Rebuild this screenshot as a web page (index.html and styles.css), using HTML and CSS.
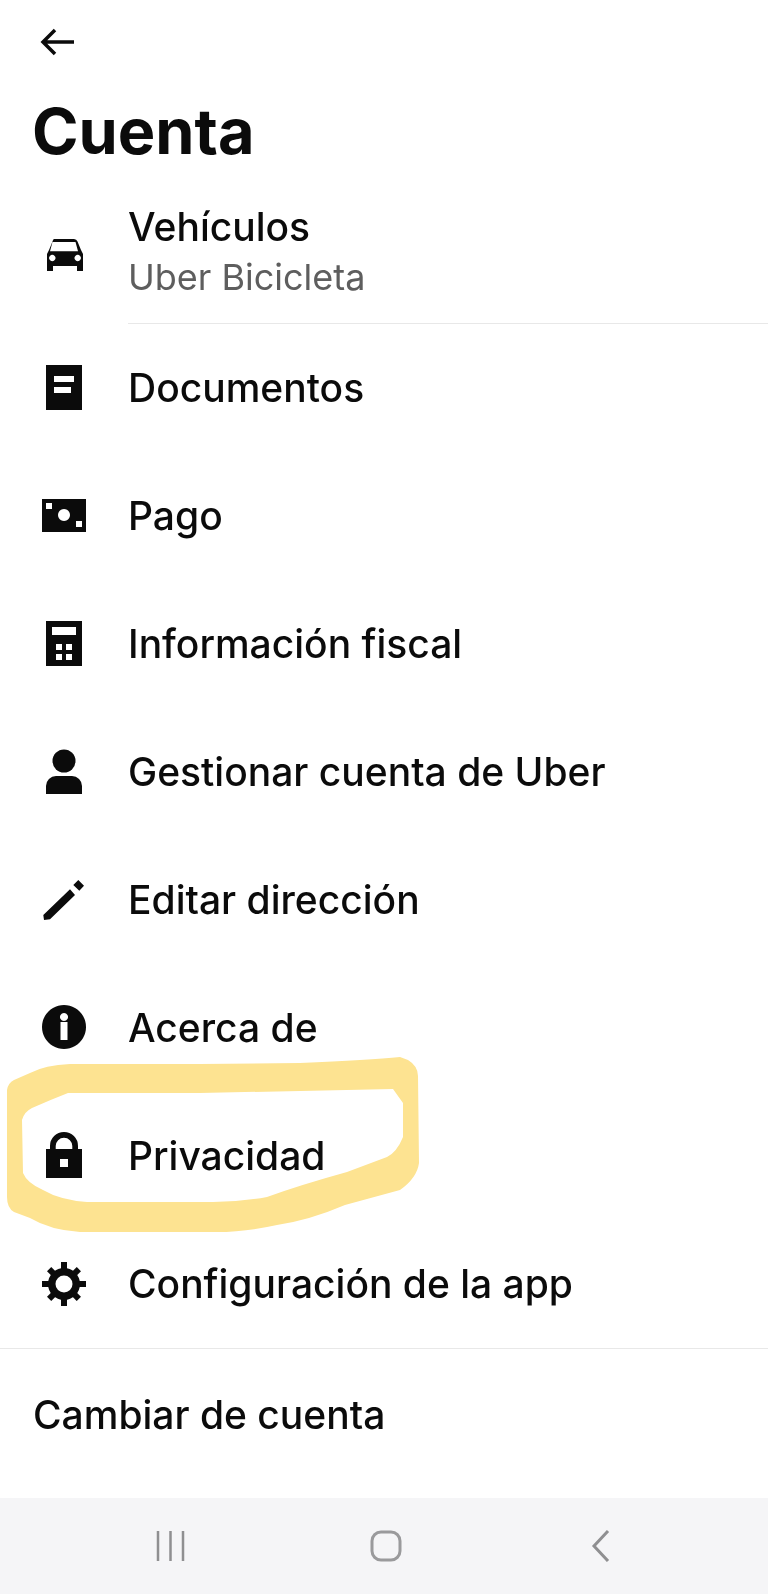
FILE: index.html
```html
<!DOCTYPE html>
<html lang="es">
<head>
<meta charset="utf-8">
<title>Cuenta</title>
<link rel="stylesheet" href="styles.css">
</head>
<body>
<div class="screen">
  <header class="head">
    <svg class="back" viewBox="0 0 36 30" aria-hidden="true"><path d="M34 15H3M15 3 3 15l12 12" fill="none" stroke="#0b0b0b" stroke-width="3.500"/></svg>
    <h1 class="title">Cuenta</h1>
  </header>
  <main class="menu">
    <div class="row row-first">
      <svg class="icon" viewBox="0 0 48 48" aria-hidden="true"><path fill-rule="evenodd" d="M14 7h20q2.500 0 3.500 2.500L41 18l2 4v17h-6v-5H13v5H7V22l2-4 3.500-8.500Q13 7 14 7Zm-1.500 3L10 19.300h28L35.500 10ZM12.300 22.800a3.200 3.200 0 1 0 .01 0ZM37.700 22.800a3.200 3.200 0 1 0 .01 0Z" fill="#0b0b0b"/></svg>
      <div class="two">
        <span class="label">Vehículos</span>
        <span class="sub">Uber Bicicleta</span>
      </div>
    </div>
    <div class="row">
      <svg class="icon" viewBox="0 0 48 48" aria-hidden="true"><path fill-rule="evenodd" d="M6 1h36v45H6ZM14 12v6h20v-6ZM14 23v6h17v-6Z" fill="#0b0b0b"/></svg>
      <span class="label">Documentos</span>
    </div>
    <div class="row">
      <svg class="icon" viewBox="0 0 48 48" aria-hidden="true"><path fill-rule="evenodd" d="M2 7h44v33H2ZM6 11v6h6v-6ZM36 29v6h6v-6ZM24 17a6 6 0 1 0 .01 0Z" fill="#0b0b0b"/></svg>
      <span class="label">Pago</span>
    </div>
    <div class="row">
      <svg class="icon" viewBox="0 0 48 48" aria-hidden="true"><path fill-rule="evenodd" d="M6 1h36v45H6ZM12 7v8h24v-8ZM16 24v6h6v-6ZM26 24v6h6v-6ZM16 34v6h6v-6ZM26 34v6h6v-6Z" fill="#0b0b0b"/></svg>
      <span class="label">Información fiscal</span>
    </div>
    <div class="row">
      <svg class="icon" viewBox="0 0 48 48" aria-hidden="true"><circle cx="24" cy="13" r="11.500" fill="#0b0b0b"/><path d="M6 46V38a10 10 0 0 1 10-10h16a10 10 0 0 1 10 10v8Z" fill="#0b0b0b"/></svg>
      <span class="label">Gestionar cuenta de Uber</span>
    </div>
    <div class="row">
      <svg class="icon" viewBox="0 0 48 48" aria-hidden="true"><path d="M3.300 39 30 13.300 35 19 10 43.300 4 44ZM38.300 4 44 9.700 39.300 14.700 33.300 9Z" fill="#0b0b0b"/></svg>
      <span class="label">Editar dirección</span>
    </div>
    <div class="row">
      <svg class="icon" viewBox="0 0 48 48" aria-hidden="true"><path fill-rule="evenodd" d="M24 1a22 22 0 1 0 .01 0ZM24 9a4 4 0 1 0 .01 0ZM20.500 18v18h7V18Z" fill="#0b0b0b"/></svg>
      <span class="label">Acerca de</span>
    </div>
    <div class="row">
      <svg class="icon" viewBox="0 0 48 48" aria-hidden="true"><path fill-rule="evenodd" d="M6 17h4v-3a14 14 0 0 1 28 0v3h4v29H6ZM15.700 17h16.600v-3a8.300 8.300 0 0 0-16.600 0ZM20 27v8h8v-8Z" fill="#0b0b0b"/></svg>
      <span class="label">Privacidad</span>
    </div>
    <div class="row">
      <svg class="icon" viewBox="0 0 48 48" aria-hidden="true">
        <circle cx="24" cy="24" r="16" fill="#0b0b0b"/>
        <g fill="#0b0b0b">
          <rect x="21" y="2" width="6" height="44"/>
          <rect x="2" y="21" width="44" height="6"/>
          <rect x="21" y="3" width="6" height="42" transform="rotate(45 24 24)"/>
          <rect x="21" y="3" width="6" height="42" transform="rotate(-45 24 24)"/>
        </g>
        <circle cx="24" cy="24" r="8.500" fill="#fff"/>
      </svg>
      <span class="label">Configuración de la app</span>
    </div>
    <div class="switch">
      <span class="label">Cambiar de cuenta</span>
    </div>
  </main>
  <nav class="navbar">
    <svg class="nav-recent" viewBox="0 0 32 32" aria-hidden="true"><path d="M3 1v30M15.500 1v30M28 1v30" stroke="#8f8f91" stroke-width="2.500" fill="none"/></svg>
    <svg class="nav-home" viewBox="0 0 32 32" aria-hidden="true"><rect x="2" y="2" width="28" height="28" rx="9" fill="none" stroke="#9a9a9c" stroke-width="3"/></svg>
    <svg class="nav-back" viewBox="0 0 20 32" aria-hidden="true"><path d="M17 1 3 16l14 15" fill="none" stroke="#8f8f91" stroke-width="3"/></svg>
  </nav>
  <svg class="marker" viewBox="0 0 430 200" aria-hidden="true"><path fill-rule="evenodd" d="M7 50Q8 43 14 40L30 33Q45 25 70 24L200 24 300 23Q370 20 400 17L408 20Q418 26 418 36L419 123Q417 138 400 150L345 165Q310 180 277 185Q245 192 217 192L80 192Q50 190 30 178L14 172Q7 168 7 157ZM22 80Q24 72 32 68Q50 60 68 53L200 53 393 49 403 63 403 97Q397 112 387 117L347 132Q300 145 267 157Q240 162 213 162L87 162Q60 160 43 150Q27 143 23 133Z" fill="#fde391"/></svg>
</div>
</body>
</html>
```
FILE: styles.css
```css
* { box-sizing: border-box; }
html, body { margin: 0; padding: 0; background: #fff; }
.screen {
  position: relative;
  width: 768px;
  height: 1594px;
  display: flex;
  flex-direction: column;
  font-family: "Inter", "Liberation Sans", sans-serif;
  color: #0b0b0b;
  overflow: hidden;
}
.head { height: 196px; padding: 27px 0 0 40px; display: flex; flex-direction: column; align-items: flex-start; }
.back { width: 36px; height: 30px; display: block; }
.title { margin: 36px 0 0 -8px; font-size: 63px; line-height: 76px; font-weight: 700; }
.menu { display: flex; flex-direction: column; }
.row { height: 128px; display: flex; align-items: center; padding-left: 40px; gap: 40px; flex-shrink: 0; }
.row-first { position: relative; padding-bottom: 8px; }
.row-first::after { content: ""; position: absolute; left: 128px; right: 0; bottom: 0; height: 1px; background: #e8e8e8; }
.two { display: flex; flex-direction: column; gap: 7px; margin-bottom: 10px; }
.icon { width: 48px; height: 48px; flex-shrink: 0; }
.label { font-size: 39px; line-height: 44px; font-weight: 500; white-space: nowrap; }
.sub { font-size: 36px; line-height: 42px; color: #5e5e5e; white-space: nowrap; }
.switch { border-top: 1px solid #e8e8e8; height: 150px; padding: 44px 0 0 33px; flex-shrink: 0; }
.navbar { flex: 1; background: #f5f5f7; display: flex; align-items: center; padding-left: 155px; }
.nav-recent { width: 32px; height: 32px; }
.nav-home { width: 32px; height: 32px; margin-left: 183px; }
.nav-back { width: 20px; height: 32px; margin-left: 189px; }
.marker { position: absolute; left: 0; top: 1040px; width: 430px; height: 200px; mix-blend-mode: multiply; }
```
